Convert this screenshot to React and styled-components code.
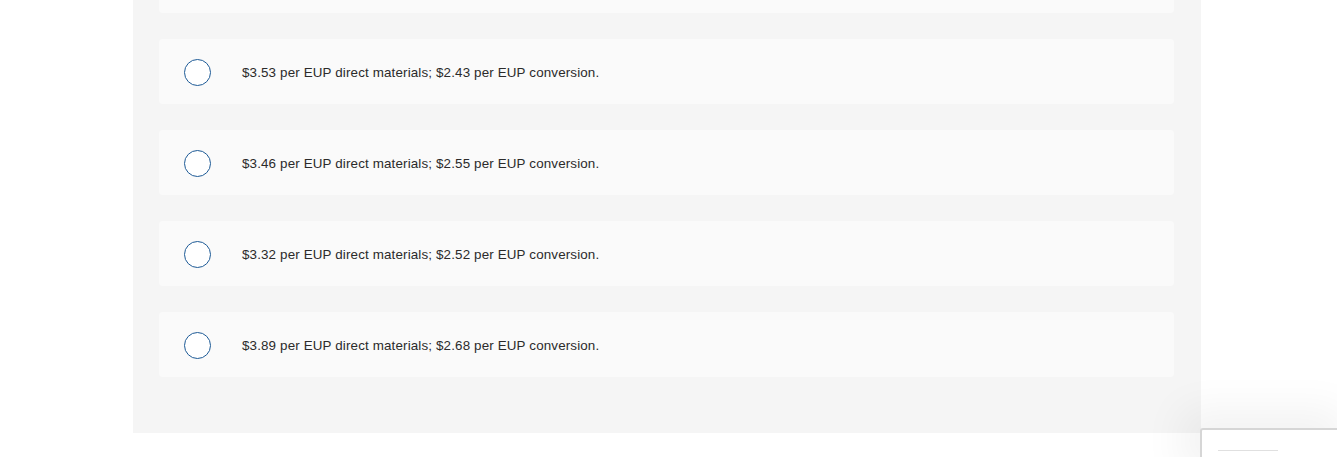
import React from 'react';
import styled, { createGlobalStyle } from 'styled-components';

const GlobalStyle = createGlobalStyle`
  html, body {
    margin: 0;
    padding: 0;
    background: #fff;
    overflow: hidden;
  }
  body {
    font-family: "Liberation Sans", Arial, sans-serif;
  }
`

const Page = styled.div`
  width: 1337px;
  height: 457px;
  position: relative;
  overflow: hidden;
`

const Panel = styled.div`
  margin-left: 133px;
  margin-top: -52px;
  width: 1068px;
  height: 485px;
  background: #f5f5f5;
  box-sizing: border-box;
  padding: 0 27px 0 26px;
  display: flex;
  flex-direction: column;
  gap: 26px;
`

const Card = styled.label`
  display: flex;
  align-items: center;
  height: 65px;
  flex-shrink: 0;
  background: #fafafa;
  border-radius: 4px;
  padding-left: 25px;
  cursor: pointer;
`

const Radio = styled.span`
  width: 25px;
  height: 25px;
  border: 1.5px solid #1d5a96;
  border-radius: 50%;
  background: #fff;
  flex-shrink: 0;
  margin-top: 1px;
`

const Text = styled.span`
  margin-left: 31px;
  margin-top: 2px;
  font-size: 13.4px;
  color: #2b2b2b;
  letter-spacing: 0.14px;
`

const Widget = styled.div`
  position: absolute;
  left: 1200px;
  top: 428px;
  width: 160px;
  height: 60px;
  background: #fff;
  border: 2px solid #d6d6d6;
  border-radius: 3px;
  box-shadow: -20px -20px 40px rgba(0, 0, 0, 0.05);
`

const WidgetLine = styled.div`
  margin: 20px 0 0 16px;
  height: 1px;
  width: 60px;
  background: #e0e0e0;
`

const options = [
  null,
  '$3.53 per EUP direct materials; $2.43 per EUP conversion.',
  '$3.46 per EUP direct materials; $2.55 per EUP conversion.',
  '$3.32 per EUP direct materials; $2.52 per EUP conversion.',
  '$3.89 per EUP direct materials; $2.68 per EUP conversion.',
]

export default function App() {
  return (
    <Page>
      <GlobalStyle />
      <Panel>
        {options.map((item, i) => (
          <Card key={i}>
            {item && <Radio />}
            {item && <Text>{item}</Text>}
          </Card>
        ))}
      </Panel>
      <Widget>
        <WidgetLine />
      </Widget>
    </Page>
  )
}
